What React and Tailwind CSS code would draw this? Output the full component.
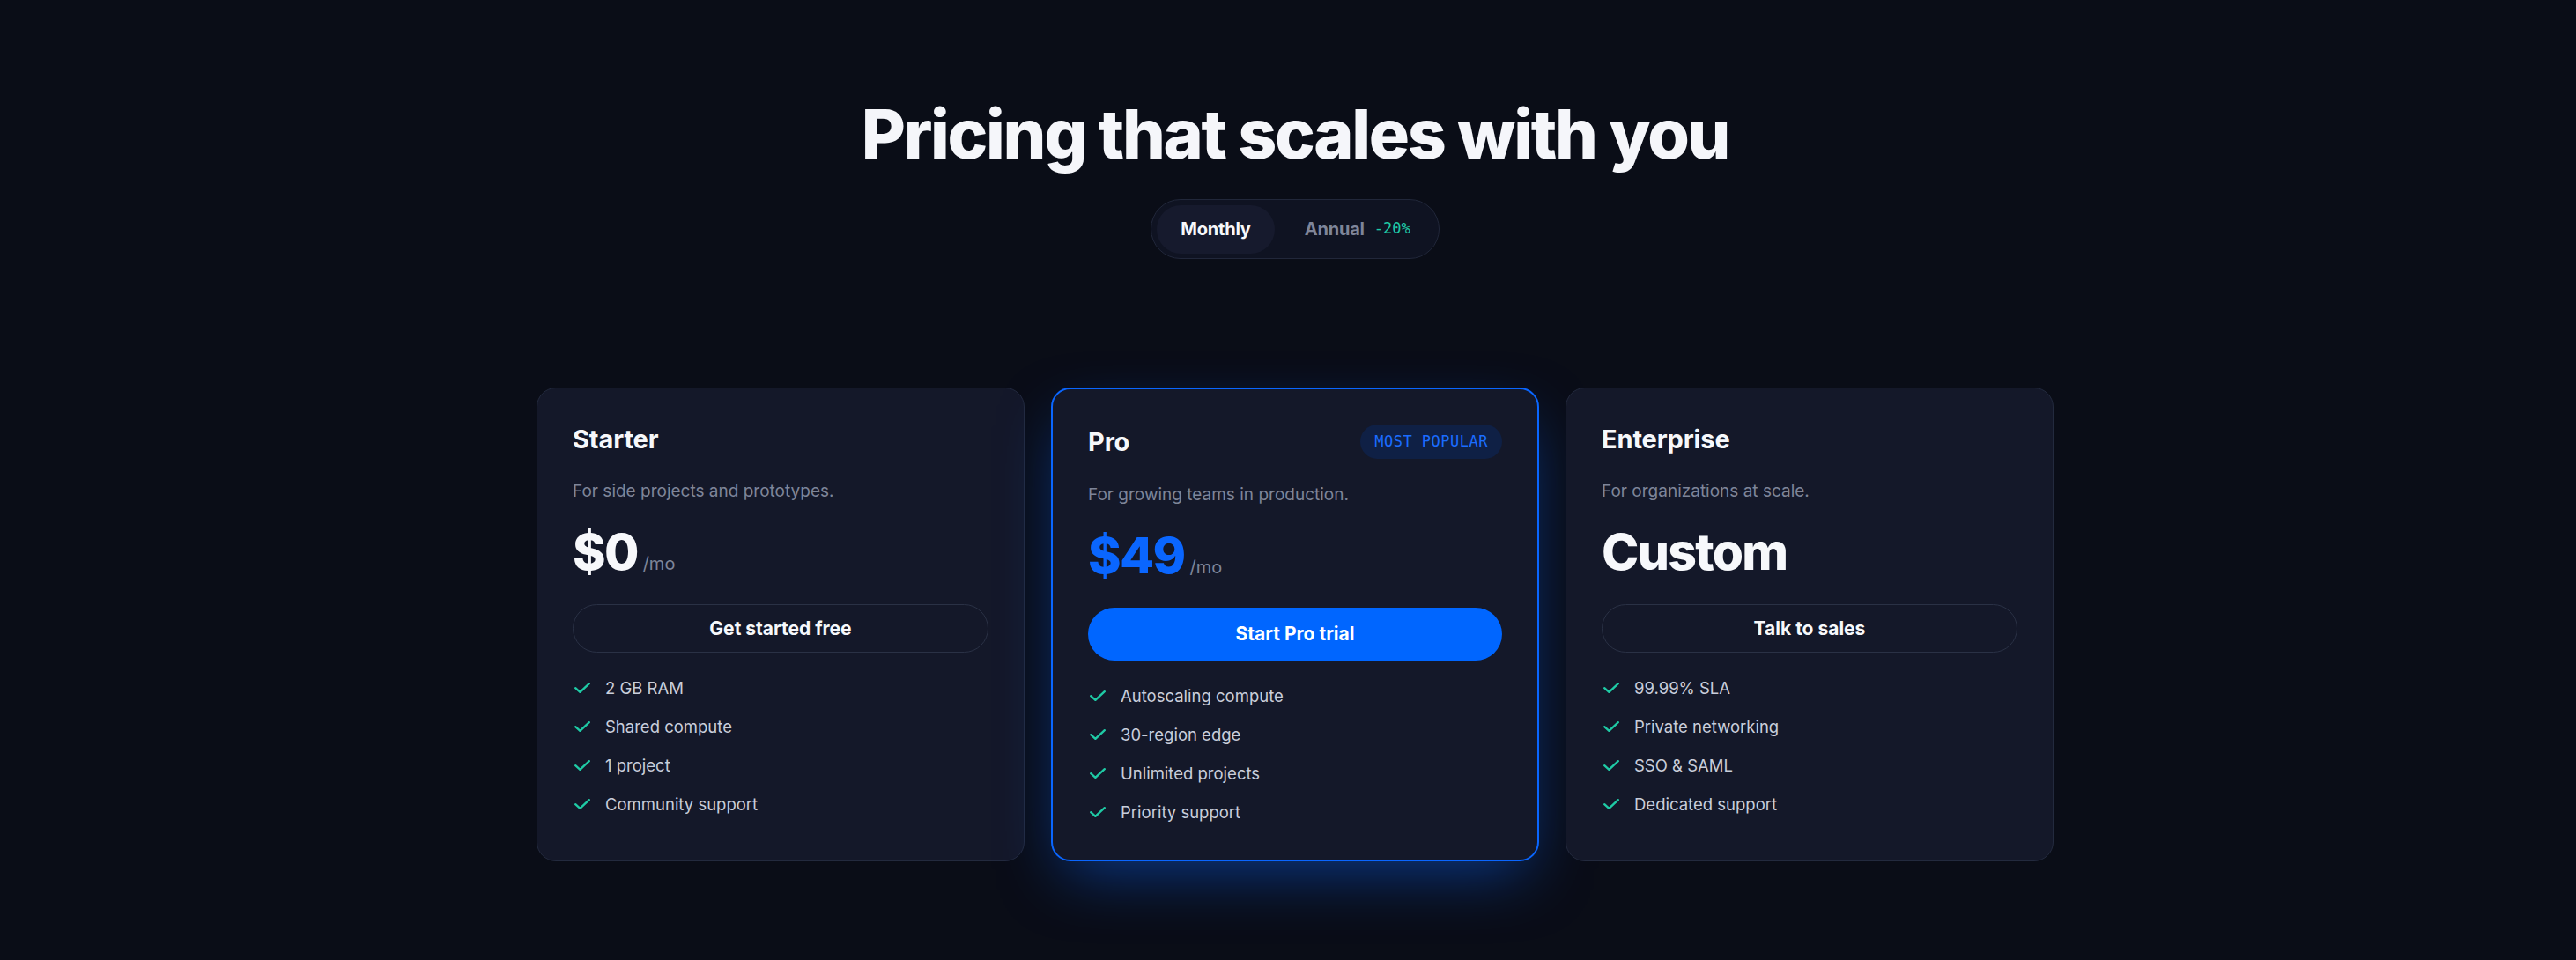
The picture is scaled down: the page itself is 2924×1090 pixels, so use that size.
import React from "react";

const plans = [
  {
    name: "Starter",
    blurb: "For side projects and prototypes.",
    price: "$0",
    unit: "/mo",
    cta: "Get started free",
    features: ["2 GB RAM", "Shared compute", "1 project", "Community support"],
  },
  {
    name: "Pro",
    blurb: "For growing teams in production.",
    price: "$49",
    unit: "/mo",
    cta: "Start Pro trial",
    featured: true,
    features: ["Autoscaling compute", "30-region edge", "Unlimited projects", "Priority support"],
  },
  {
    name: "Enterprise",
    blurb: "For organizations at scale.",
    price: "Custom",
    cta: "Talk to sales",
    features: ["99.99% SLA", "Private networking", "SSO & SAML", "Dedicated support"],
  },
];

const sans = "font-['Inter','Liberation_Sans',sans-serif]";
const mono = "font-['DejaVu_Sans_Mono','Liberation_Mono',monospace]";

function Check() {
  return (
    <svg viewBox="0 0 18 12" className="h-3 w-[18px] shrink-0" fill="none">
      <path d="M1.2 6.2 L6.4 10.8 L16.8 1.2" stroke="#1fcaa5" strokeWidth="2.4" strokeLinecap="round" strokeLinejoin="round" />
    </svg>
  );
}

function PlanCard({ plan }) {
  const featured = plan.featured;
  return (
    <div
      className={
        featured
          ? "flex flex-col rounded-[22px] border-2 border-[#0a66ff] bg-[#141829] px-10 pt-10 pb-10 shadow-[0_26px_70px_-16px_rgba(10,102,255,0.5)]"
          : "flex flex-col rounded-[22px] border border-[#232a3e] bg-[#141829] px-10 pt-10 pb-10"
      }
    >
      <div className={`flex items-center justify-between ${featured ? "h-[39px]" : "h-[36px]"}`}>
        <h3 className="text-[29px] leading-[36px] font-bold tracking-[-0.005em] text-[#f7f8fb]">{plan.name}</h3>
        {featured && (
          <span className={`${mono} flex h-[39px] items-center rounded-full bg-[#0f2045] px-4 text-[17px] tracking-[0.5px] text-[#1b6cff]`}>
            MOST POPULAR
          </span>
        )}
      </div>
      <p className="mt-[27px] text-[19px] leading-[28px] text-[#7e8599]">{plan.blurb}</p>
      <div className="mt-[27px] flex items-baseline gap-[6px]">
        <span
          className={`text-[57px] leading-[56px] font-extrabold tracking-[-0.03em] ${featured ? "text-[#0a66ff]" : "text-[#f7f8fb]"}`}
        >
          {plan.price}
        </span>
        {plan.unit && <span className="text-[20px] text-[#7e8599]">{plan.unit}</span>}
      </div>
      <button
        className={
          featured
            ? "mt-[31px] h-[60px] w-full rounded-full bg-[#0066ff] text-[21px] font-bold text-white"
            : "mt-[31px] h-[55px] w-full rounded-full border border-[#2a3145] bg-transparent text-[21px] font-bold text-[#f7f8fb]"
        }
      >
        {plan.cta}
      </button>
      <ul className="mt-[26px] flex flex-col gap-4">
        {plan.features.map((f) => (
          <li key={f} className="flex items-center gap-[17px] pl-[2px] text-[18.5px] leading-[28px] text-[#c9cedb]">
            <Check />
            <span>{f}</span>
          </li>
        ))}
      </ul>
    </div>
  );
}

export default function App() {
  return (
    <div className={`${sans} min-h-[1090px] w-full bg-[#0a0d17] pt-[114px] pl-4`}>
      <div className="flex flex-col items-center">
        <h1 className="text-[77px] leading-[77px] font-extrabold tracking-[-0.03em] text-[#f5f6fa]">
          Pricing that scales with you
        </h1>
        <div className="mt-[35px] flex h-[68px] items-center rounded-full border border-[#21273a] bg-[#0f1322] p-[6px]">
          <button className="h-[55px] rounded-full bg-[#161a2d] px-[27px] text-[20px] font-bold tracking-[-0.01em] text-[#f7f8fb]">
            Monthly
          </button>
          <button className="flex h-[55px] items-center gap-[11px] pr-[26px] pl-[34px] text-[20px] font-bold tracking-[-0.01em] text-[#7e8599]">
            Annual
            <span className={`${mono} text-[17px] font-normal tracking-normal text-[#1fcaa5]`}>-20%</span>
          </button>
        </div>
      </div>
      <div className="mx-auto mt-[146px] grid w-[1722px] grid-cols-3 gap-[30px]">
        {plans.map((p) => (
          <PlanCard key={p.name} plan={p} />
        ))}
      </div>
    </div>
  );
}
